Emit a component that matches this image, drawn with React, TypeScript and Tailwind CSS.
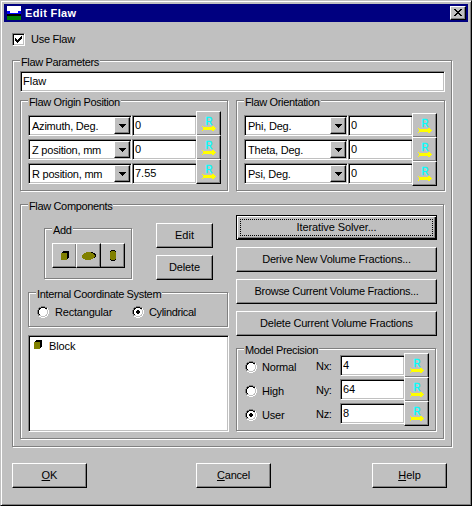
import { useState, type ReactNode } from "react"
import clsx from "clsx"

const raised = "bg-[#c0c0c0] border border-t-white border-l-white border-r-black border-b-black shadow-[inset_-1px_-1px_0_#808080]"
const sunken = "bg-white border border-t-[#808080] border-l-[#808080] border-r-white border-b-white shadow-[inset_1px_1px_0_#000,inset_-1px_-1px_0_#c0c0c0]"
const focusRing = "border border-black bg-[#c0c0c0] p-[3px] shadow-[inset_1px_1px_0_#fff,inset_-1px_-1px_0_#000,inset_-2px_-2px_0_#808080]"

function Group({ title, className, children }: { title: string; className?: string; children: ReactNode }) {
  return (
    <div className={clsx("flex flex-col items-start border border-[#808080] px-[7px] shadow-[1px_1px_0_#fff,inset_1px_1px_0_#fff]", className)}>
      <div className="-mt-[5px] -mb-[2px] h-[13px] shrink-0 bg-[#c0c0c0] px-px leading-[13px] tracking-[-0.35px]">{title}</div>
      {children}
    </div>
  )
}

function Button({ children, className, focused }: { children: ReactNode; className?: string; focused?: boolean }) {
  return (
    <button type="button" className={clsx("flex h-[25px] shrink-0 justify-center leading-[13px]", focused ? focusRing : [raised, "pt-[5px]"], className)}>
      {focused ? <span className="flex h-[17px] w-full justify-center border border-dotted border-black pt-px">{children}</span> : children}
    </button>
  )
}

function ResultButton() {
  return (
    <button type="button" className={clsx("relative h-[25px] w-[25px] shrink-0", raised)}>
      <svg className="block" width="23" height="23" viewBox="0 0 23 23" shapeRendering="crispEdges">
        <text x="8.5" y="13" fontSize="11" fill="#00ffff" stroke="#00ffff" strokeWidth="0.4" textLength="7" lengthAdjust="spacingAndGlyphs">
          R
        </text>
        <path d="M5 14h1v1h9v-1h2v1h1v1h1v1h-1v1h-1v1h-2v-1H6v1H5v-1h1v-3H5z" fill="#ffff00" />
      </svg>
    </button>
  )
}

function Field({ value, className }: { value: string; className?: string }) {
  const [text, setText] = useState(value)
  return (
    <input
      value={text}
      onChange={(e) => setText(e.target.value)}
      className={clsx("block h-[21px] shrink-0 pb-px pl-[2px] leading-[13px] outline-none", sunken, className)}
    />
  )
}

function Combo({ value }: { value: string }) {
  return (
    <div className={clsx("flex h-[21px] w-[104px] shrink-0 justify-between p-px", sunken)}>
      <span className="pt-[3px] pl-[2px] leading-[13px] tracking-[-0.22px]">{value}</span>
      <span className={clsx("flex h-[17px] w-4 items-center justify-center", raised)}>
        <svg width="7" height="4" viewBox="0 0 7 4" shapeRendering="crispEdges">
          <path d="M0 0h7v1H6v1H5v1H4v1H3V3H2V2H1V1H0z" />
        </svg>
      </span>
    </div>
  )
}

function ParamRow({ label, value, className }: { label: string; value: string; className?: string }) {
  return (
    <div className="flex h-6">
      <div className="flex pt-1">
        <Combo value={label} />
        <Field value={value} className="w-[65px]" />
      </div>
      <div className={clsx("-ml-px", className)}>
        <ResultButton />
      </div>
    </div>
  )
}

function Radio({ label, checked, onSelect, className = "gap-[5px]" }: { label: string; checked: boolean; onSelect: () => void; className?: string }) {
  return (
    <button type="button" role="radio" aria-checked={checked} onClick={onSelect} className={clsx("flex h-[13px] items-start leading-[13px]", className)}>
      <svg width="12" height="12" viewBox="0 0 12 12" shapeRendering="crispEdges">
        <path d="M4 0h4v1h2v1H8V1H4v1H2v2H1v4h1v2H1V8H0V4h1V2h1V1h2z" fill="#808080" />
        <path d="M4 1h4v1h2v1H8V2H4v1H3v1H2v4h1v1H2V8H1V4h1V2h2z" fill="#000" />
        <path d="M10 2h1v2h1v4h-1v2h-1v1H8v1H4v-1H2v-1h2v1h4v-1h2V8h1V4h-1z" fill="#fff" />
        <path d="M4 2h4v1h1v1h1v4H9v1H8v1H4V9H3V8H2V4h1V3h1z" fill="#fff" />
        {checked && <path d="M5 4h2v1h1v2H7v1H5V7H4V5h1z" fill="#000" />}
      </svg>
      <span>{label}</span>
    </button>
  )
}

function BlockIcon() {
  return (
    <svg width="8" height="9" viewBox="0 0 8 9" shapeRendering="crispEdges">
      <path d="M2 0h6v7H7v1H6V2H1V1h1z" fill="#000" />
      <path d="M0 2h6v7H0z" fill="#808000" />
    </svg>
  )
}

function EllipsoidIcon() {
  return (
    <svg width="14" height="8" viewBox="0 0 14 8" shapeRendering="crispEdges">
      <path d="M5 0h6v1h2v1h1v3h-1v1h-1V3h-1V2H9V1H5z" fill="#000" />
      <path d="M4 0h5v1h2v1h1v1h1v2h-1v1h-1v1H9v1H3V7H1V6H0V3h1V2h1V1h2z" fill="#808000" />
    </svg>
  )
}

function CylinderIcon() {
  return (
    <svg width="6" height="11" viewBox="0 0 6 11" shapeRendering="crispEdges">
      <path d="M1 0h4v1h1v9H5v1H1v-1H0V1h1z" fill="#000" />
      <path d="M1 1h4v1h1v7H5v1H1V9H0V2h1z" fill="#808000" />
    </svg>
  )
}

const origin = [
  { label: "Azimuth, Deg.", value: "0" },
  { label: "Z position, mm", value: "0" },
  { label: "R position, mm", value: "7.55" },
]
const orientation = [
  { label: "Phi, Deg.", value: "0" },
  { label: "Theta, Deg.", value: "0" },
  { label: "Psi, Deg.", value: "0" },
]
const precisions = [
  { name: "Normal", axis: "Nx:", value: "4" },
  { name: "High", axis: "Ny:", value: "64" },
  { name: "User", axis: "Nz:", value: "8" },
]
const shapes = [
  { name: "Block", Icon: BlockIcon },
  { name: "Ellipsoid", Icon: EllipsoidIcon },
  { name: "Cylinder", Icon: CylinderIcon },
]

export default function App() {
  const [useFlaw, setUseFlaw] = useState(true)
  const [system, setSystem] = useState("Cylindrical")
  const [precision, setPrecision] = useState("User")

  return (
    <div className="h-[506px] w-[472px] overflow-hidden border border-t-[#c0c0c0] border-r-black border-b-black border-l-[#c0c0c0] bg-[#c0c0c0] p-[3px] font-['Liberation_Sans',Arial,sans-serif] text-[11px] text-black shadow-[inset_1px_1px_0_#fff,inset_-1px_-1px_0_#808080]">
      <div className="flex h-[18px] w-[464px] items-center bg-[#000080] pr-[2px] pl-[3px]">
        <svg width="14" height="14" viewBox="0 0 14 14" shapeRendering="crispEdges">
          <path d="M0 0h14v5H0z" fill="#fff" />
          <path d="M0 5h3v2h8V5h3v3H0z" fill="#0000ff" />
          <path d="M3 5h8v2H3z" fill="#fff" />
          <path d="M0 8h14v2H0z" fill="#000" />
          <path d="M0 10h14v4H0z" fill="#008000" />
        </svg>
        <span className="ml-1 grow leading-[13px] font-bold tracking-[0.35px] text-white">Edit Flaw</span>
        <button type="button" aria-label="Close" className={clsx("flex h-[14px] w-4 justify-center pt-[2px]", raised)}>
          <svg width="8" height="7" viewBox="0 0 8 7" shapeRendering="crispEdges">
            <path d="M0 0h2v1h1v1h2V1h1V0h2v1H7v1H6v1H5v1h1v1h1v1h1v1H6V6H5V5H3v1H2v1H0V6h1V5h1V4h1V3H2V2H1V1H0z" />
          </svg>
        </button>
      </div>

      <div className="flex w-[449px] flex-col pt-[11px] pl-2">
        <label className="flex h-[13px] items-center gap-[6px] leading-[13px] tracking-[-0.25px]">
          <button type="button" role="checkbox" aria-checked={useFlaw} onClick={() => setUseFlaw(!useFlaw)} className={clsx("h-[13px] w-[13px] p-[2px]", sunken)}>
            {useFlaw && (
              <svg className="block" width="7" height="7" viewBox="0 0 7 7" shapeRendering="crispEdges">
                <path d="M0 2h1v1h1v1h1V3h1V2h1V1h1V0h1v3H6v1H5v1H4v1H3v1H2V6H1V5H0z" />
              </svg>
            )}
          </button>
          <span>Use Flaw</span>
        </label>

        <Group title="Flaw Parameters" className="mt-[14px] h-[387px] w-[440px]">
          <Field value="Flaw" className="mt-1 w-[425px]" />

          <div className="mt-2 flex gap-2">
            <Group title="Flaw Origin Position" className="h-[91px] w-[208px]">
              <div className="mt-1 flex flex-col">
                {origin.map((row) => (
                  <ParamRow key={row.label} {...row} />
                ))}
              </div>
            </Group>
            <Group title="Flaw Orientation" className="h-[91px] w-[209px]">
              <div className="mt-1 flex flex-col">
                {orientation.map((row) => (
                  <ParamRow key={row.label} {...row} className="pt-[2px]" />
                ))}
              </div>
            </Group>
          </div>

          <Group title="Flaw Components" className="mt-[13px] h-[235px] w-[424px]">
            <div className="mt-1 flex gap-2">
              <div className="flex w-[200px] flex-col">
                <div className="flex pt-2 pl-4">
                  <Group title="Add" className="mt-[5px] h-[51px] w-[88px]">
                    <div className="mt-2 flex">
                      {shapes.map(({ name, Icon }) => (
                        <button
                          key={name}
                          type="button"
                          aria-label={name}
                          className={clsx("-mr-px flex h-[25px] w-[25px] items-center justify-center", raised, name === "Ellipsoid" && "relative z-10")}
                        >
                          <Icon />
                        </button>
                      ))}
                    </div>
                  </Group>
                  <div className="ml-6 flex flex-col gap-[7px]">
                    <Button className="w-[57px]">Edit</Button>
                    <Button className="w-[57px] tracking-[-0.1px]">Delete</Button>
                  </div>
                </div>

                <Group title="Internal Coordinate System" className="mt-3 h-[35px] w-[200px]">
                  <div className="mt-[7px] flex pl-px">
                    <div className="w-[95px]">
                      <Radio
                        label="Rectangular"
                        className="gap-[6px] tracking-[-0.2px]"
                        checked={system === "Rectangular"}
                        onSelect={() => setSystem("Rectangular")}
                      />
                    </div>
                    <Radio
                      label="Cylindrical"
                      className="gap-[5px] tracking-[-0.35px]"
                      checked={system === "Cylindrical"}
                      onSelect={() => setSystem("Cylindrical")}
                    />
                  </div>
                </Group>

                <div className={clsx("mt-2 h-[97px] w-[201px] p-[4px]", sunken)}>
                  <div className="flex h-[13px] items-start gap-[7px] pl-px leading-[13px] tracking-[-0.1px]">
                    <BlockIcon />
                    <span>Block</span>
                  </div>
                </div>
              </div>

              <div className="flex w-[201px] flex-col gap-[7px]">
                <Button focused className="tracking-[-0.1px]">Iterative Solver...</Button>
                <Button className="tracking-[-0.18px]">Derive New Volume Fractions...</Button>
                <Button className="tracking-[-0.28px]">Browse Current Volume Fractions...</Button>
                <Button className="tracking-[-0.22px]">Delete Current Volume Fractions</Button>
                <Group title="Model Precision" className="mt-[5px] h-[83px] w-[200px]">
                  <div className="-mt-[2px] flex flex-col">
                    {precisions.map((p) => (
                      <div key={p.name} className="flex h-6">
                        <div className="w-[72px] pt-2 pl-px">
                          <Radio
                            label={p.name}
                            className="gap-[5px] tracking-[-0.2px]"
                            checked={precision === p.name}
                            onSelect={() => setPrecision(p.name)}
                          />
                        </div>
                        <span className="w-6 pt-[7px] leading-[13px] tracking-[-0.3px]">{p.axis}</span>
                        <Field value={p.value} className="mt-[2px] w-[65px]" />
                        <div className="-ml-px">
                          <ResultButton />
                        </div>
                      </div>
                    ))}
                  </div>
                </Group>
              </div>
            </div>
          </Group>
        </Group>

        <div className="mt-4 flex">
          <Button className="w-[75px]"><u>O</u>K</Button>
          <Button className="ml-[109px] w-[75px] tracking-[-0.2px]"><u>C</u>ancel</Button>
          <Button className="ml-[101px] w-[75px]"><u>H</u>elp</Button>
        </div>
      </div>
    </div>
  )
}
